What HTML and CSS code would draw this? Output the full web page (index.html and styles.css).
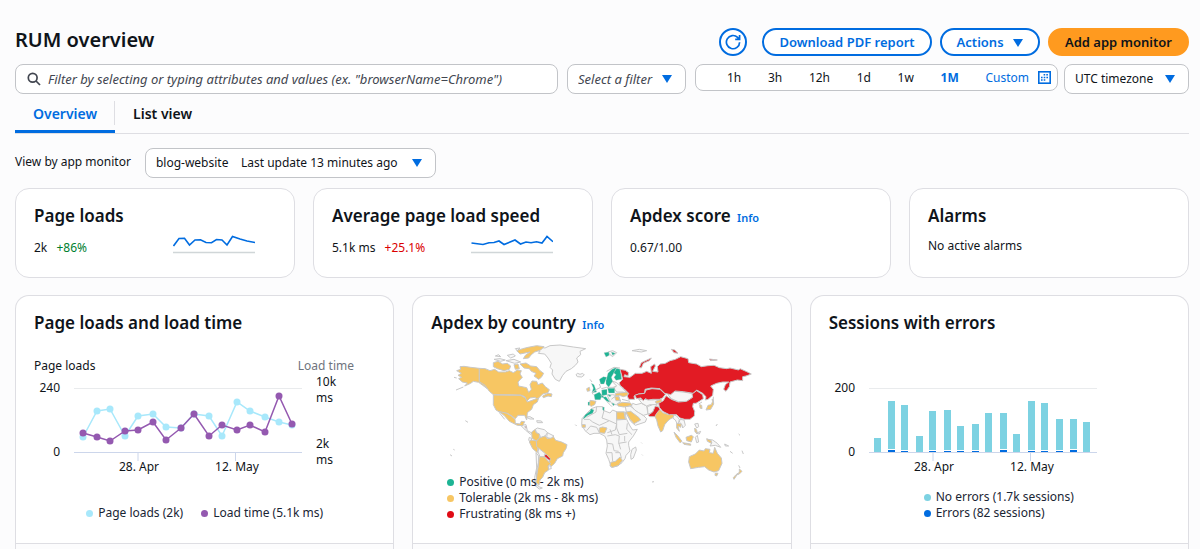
FILE: index.html
```
<!DOCTYPE html>
<html lang="en">

<head>
    <meta charset="UTF-8">
    <meta name="viewport" content="width=device-width, initial-scale=1.0">
    <title>RUM overview</title>
    <link rel="stylesheet" href="styles.css">
</head>

<body>
    <header class="page-header">
        <h1>RUM overview</h1>
        <div class="actions">
            <button type="button" class="btn btn-icon" aria-label="Refresh">
                <svg width="16" height="16" viewBox="0 0 16 16">
                    <path d="M14.6 8.200A6.600 6.600 0 1 1 12.600 3.400L14 5M14.600 1V5.400H10.200" />
                </svg>
            </button>
            <button type="button" class="btn">Download PDF report</button>
            <button type="button" class="btn btn-menu">Actions <span class="caret"></span></button>
            <button type="button" class="btn btn-primary">Add app monitor</button>
        </div>
    </header>

    <div class="toolbar">
        <div class="search">
            <svg width="14" height="14" viewBox="0 0 14 14">
                <circle cx="5.7" cy="5.7" r="4.4" />
                <path d="M9 9L13 13" />
            </svg>
            <input type="text" aria-label="Filter" placeholder="Filter by selecting or typing attributes and values (ex. &quot;browserName=Chrome&quot;)">
        </div>
        <div class="select select-filter">
            <select aria-label="Select a filter">
                <option>Select a filter</option>
            </select>
            <span class="caret"></span>
        </div>
        <div class="time-range">
            <button type="button">1h</button>
            <button type="button">3h</button>
            <button type="button">12h</button>
            <button type="button">1d</button>
            <button type="button">1w</button>
            <button type="button" class="active">1M</button>
            <button type="button" class="custom">Custom
                <svg width="13" height="13" viewBox="0 0 13 13">
                    <rect x=".8" y=".8" width="11.400" height="11.400" fill="none" stroke="currentColor" stroke-width="1.6" />
                    <path d="M5.600 3.700H10M3 6.400H10M3 9.100H7.400" stroke="currentColor" stroke-width="1.500" stroke-dasharray="1.600 1.100" />
                </svg>
            </button>
        </div>
        <div class="select select-zone">
            <select aria-label="Timezone">
                <option>UTC timezone</option>
            </select>
            <span class="caret"></span>
        </div>
    </div>

    <nav class="tabs">
        <a href="#overview" class="active">Overview</a>
        <a href="#list">List view</a>
    </nav>

    <div class="monitor">
        <label for="monitor">View by app monitor</label>
        <div class="select select-monitor">
            <select id="monitor">
                <option>blog-website&nbsp;&nbsp;&nbsp; Last update 13 minutes ago</option>
            </select>
            <span class="caret"></span>
        </div>
    </div>

    <section class="summary">
        <article class="card">
            <h2>Page loads</h2>
            <div class="metric">
                <p>2k <span class="good">+86%</span></p>
                <svg class="spark" width="82" height="20" viewBox="0 0 82 20">
                    <path class="base" d="M0 17.5H82" />
                    <polyline points="0.500,11 6,3.500 11.500,3.300 16.500,10 22,5 27.500,4.700 33,7.500 38.500,7.700 43.500,4.500 49,5 54,10 59.500,1.500 67,4 74,6 82,7.500" />
                </svg>
            </div>
        </article>
        <article class="card">
            <h2>Average page load speed</h2>
            <div class="metric">
                <p>5.1k ms <span class="bad">+25.1%</span></p>
                <svg class="spark" width="82" height="20" viewBox="0 0 82 20">
                    <path class="base" d="M0 17.5H82" />
                    <polyline points="0.500,8 12,9.500 18,7.700 23,7.500 28,6 33,9.500 44,5 49.500,9 55,7 60,7.700 65.500,6.700 71,8 76,1.500 82,6.700" />
                </svg>
            </div>
        </article>
        <article class="card">
            <h2>Apdex score <a href="#info">Info</a></h2>
            <p>0.67/1.00</p>
        </article>
        <article class="card">
            <h2>Alarms</h2>
            <p>No active alarms</p>
        </article>
    </section>

    <section class="panels">
        <article class="panel">
            <div class="panel-body">
                <h2>Page loads and load time</h2>
                <svg class="chart" width="330" height="130" viewBox="0 0 330 130">
                    <text x="0" y="19">Page loads</text>
                    <text x="320" y="19" text-anchor="end" class="muted">Load time</text>
                    <text x="26" y="41" text-anchor="end">240</text>
                    <text x="26" y="105" text-anchor="end">0</text>
                    <text x="282" y="35">10k</text>
                    <text x="282" y="51">ms</text>
                    <text x="282" y="97">2k</text>
                    <text x="282" y="113">ms</text>
                    <path class="grid" d="M40 37.500H268" />
                    <path class="axis" d="M40 101.500H268M104 102V110M201.500 102V110" />
                    <text x="105" y="120" text-anchor="middle">28. Apr</text>
                    <text x="203" y="120" text-anchor="middle">12. May</text>
                    <g id="loads" class="loads"></g>
                    <g id="time" class="time"></g>
                </svg>
                <ul class="legend legend-row">
                    <li class="c-loads">Page loads (2k)</li>
                    <li class="c-time">Load time (5.1k ms)</li>
                </ul>
            </div>
            <div class="panel-foot"></div>
        </article>

        <article class="panel">
            <div class="panel-body">
                <h2>Apdex by country <a href="#info">Info</a></h2>
                <svg class="map" width="340" height="155" viewBox="0 0 1020 465">
                    <!-- no data -->
                    <g class="none">
                        <path d="M315 42L330 34 345 36 360 29 390 27 430 33 467 38 450 46 452 56 440 66 444 78 436 88 424 98 408 106 398 118 388 136 376 130 366 114 368 102 360 94 364 82 354 66 344 54 325 52 330 46Z" />
                        <path d="M438 116L443 112 450 115 458 112 463 117 455 123 442 122Z" />
                        <path d="M272 268L288 266 292 284 306 291 302 295 286 282Z" />
                        <path d="M316 280L322 276 343 281 353 290 345 300 332 305 328 294 319 290Z" />
                        <path d="M352 290L372 300 362 308 350 304Z" />
                        <path d="M298 304L306 308 300 318 296 312Z" />
                        <path d="M327 332L340 338 350 352 345 362 330 362 324 348Z" />
                        <path d="M318 350L326 360 325 380 320 404 319 428 316 444 326 452 337 456 328 459 314 448 314 424 320 396Z" />
                        <path d="M354 388L362 391 364 398 355 400Z" />
                        <path d="M287 243L300 242 312 249 300 249Z M320 254L334 255 338 260 322 260Z" />
                        <path d="M484 218L500 212 518 212 522 224 540 231 548 222 562 228 586 228 588 246 600 270 608 282 622 280 610 300 596 318 596 328 600 345 588 358 585 368 576 380 562 390 544 394 536 370 528 352 532 330 530 312 524 300 508 292 492 292 480 296 465 284 455 266 456 248 470 232Z" />
                        <path d="M606 340L617 333 619 342 610 366 603 370 602 356Z" />
                        <path d="M586 212L600 210 626 228 642 240 650 248 646 258 616 268 602 256 590 234Z" />
                        <path d="M608 202L618 206 634 202 650 210 654 234 640 238 626 230 614 222 604 210Z" />
                        <path d="M626 190L642 190 668 192 692 188 684 200 676 208 660 206 650 210 636 202Z" />
                        <path d="M652 212L668 206 682 206 676 216 666 230 654 234Z" />
                        <path d="M714 176L735 166 760 168 790 173 788 184 770 196 745 197 724 188Z" />
                        <path d="M732 236L740 240 748 250 744 268 736 252 728 246Z M750 250L762 252 766 268 758 276 756 266 748 258Z" />
                        <path d="M544 134L560 140 572 150 592 172 578 168 560 168 550 154 560 150Z" />
                        <path d="M532 178L548 176 566 180 572 196 560 206 548 206 538 192Z" />
                        <path d="M794 264L804 262 806 272 800 276Z M798 292L812 286 808 294Z M796 304L802 298 806 318 800 320Z M832 310L848 312 862 322 872 334 856 328 840 330 846 320Z" />
                        <path d="M534 48L548 44 560 50 548 62 540 56Z M606 44L628 40 650 44 634 48 620 46Z" />
                        <path d="M192 70L210 68 226 72 212 76Z M232 58L250 54 256 60 242 66Z M196 60L206 56 212 62Z M228 74L252 70 272 78 254 82Z M262 44L256 38 270 36Z" />
                        <path d="M884 324L896 330 886 330Z M900 346L908 352M936 344L940 354M926 294L930 298M858 270L862 264M634 320L636 322M636 356L638 358M666 438L672 437M106 254L114 259M60 356L66 360M70 340L74 342M436 266L440 270" />
                    </g>
                    <path class="borders" d="M500 212L498 228 470 244M522 224L516 246 538 254M560 226L560 252 588 250M462 250L478 250 488 258 508 268 530 258M470 284L482 270 500 274 508 290M530 258L538 254 560 264 556 282 532 290M560 252L560 276 568 296 592 292M592 262L590 280 606 296M532 300L556 296 568 300 566 320 572 340M532 322L548 324 552 344 566 346M530 350L546 350 548 376M566 322L590 318M556 350L570 350 574 366M584 300L584 316M546 296L540 280" />
                    <!-- tolerable -->
                    <g class="tolerable">
                        <path d="M90 92L102 91 122 94 148 97 148 137 162 143 172 158 158 148 146 139 130 136 122 142 104 150 112 141 97 138 86 128 95 124 84 118 94 112 80 104 92 100Z" />
                        <path d="M148 97L166 98 180 104 194 100 206 108 226 108 238 104 250 110 262 102 274 104 270 114 277 124 264 138 266 150 290 155 296 169 304 160 300 146 306 135 320 136 324 146 337 141 346 152 358 161 354 170 338 174 330 182 322 190 315 184 300 186 290 196 285 182 272 177 190 176 178 166 165 148 148 137Z" />
                        <path d="M190 80L204 76 218 84 232 82 242 90 238 100 222 104 202 98 190 92Z M252 86L264 84 268 98 256 100Z" />
                        <path d="M270 84L288 81 302 90 320 92 330 104 341 112 334 124 326 130 312 120 318 112 304 106 298 98 282 96Z" />
                        <path d="M260 44L278 38 294 34 320 29 342 32 332 42 314 48 304 56 296 66 280 68 286 58 300 48 270 54Z" />
                        <path d="M338 180L354 172 366 174 364 182 354 180 340 185Z" />
                        <path d="M190 177L272 178 286 186 292 198 314 190 326 186 322 198 310 206 305 220 292 230 290 252 284 238 264 238 256 248 246 240 232 232 208 228 198 222 190 206Z" />
                        <path d="M206 226L230 232 244 240 255 250 256 262 270 264 274 256 284 257 278 269 262 268 238 256 222 238Z" />
                        <path d="M305 288L316 280 318 290 328 294 328 308 318 315 306 306Z" />
                        <path d="M302 312L318 314 325 328 322 350 308 338 298 318Z" />
                        <path d="M328 306L345 300 352 308 365 306 370 302 377 313 395 318 411 326 408 338 400 350 398 360 382 368 374 382 364 391 354 382 360 372 352 362 345 352 330 340 320 332 319 316Z" />
                        <path d="M328 362L344 363 354 376 362 382 354 390 356 402 344 410 338 424 330 432 327 448 318 440 321 414 325 390Z" />
                        <path d="M480 193L498 196 494 206 484 211 479 208Z M470 158L478 154 480 164 472 166Z M456 266L466 266 466 274 456 274Z" />
                        <path d="M508 276L518 273 531 276 524 292 508 290Z M542 379L556 376 570 363 577 373 566 388 548 394 540 390Z" />
                        <path d="M560 228L582 228 586 250 560 250Z M588 228L602 226 626 244 632 252 612 263 600 250Z" />
                        <path d="M562 203L578 199 602 201 605 208 582 213 564 210Z M556 172L576 170 594 168 594 178 580 182 568 178 556 180Z M554 182L566 182 570 194 558 194Z" />
                        <path d="M674 240L686 218 698 230 716 236 732 232 730 244 722 248 714 254 704 266 698 284 692 288 684 270 680 252Z M676 196L694 190 694 200 678 202Z" />
                        <path d="M740 262L754 264 752 274 744 270 748 286 740 276Z M732 288L742 298 756 316 750 320 738 304Z M768 304L784 298 790 302 784 318 770 314Z M758 320L782 324 782 328 762 325Z" />
                        <path d="M834 208L844 206 848 196 846 190 850 190 851 204 842 220 828 222Z M809 206L815 208 816 218 810 216Z M830 308L844 314 844 322 832 316Z M794 276L800 282 802 292 795 288Z" />
                        <path d="M778 362L796 354 808 342 822 345 826 338 840 340 838 350 850 352 854 334 862 352 874 366 876 382 866 404 852 408 836 402 824 392 806 394 782 398 776 378Z M856 411L864 412 860 420 855 418Z" />
                        <path d="M928 399L936 406 928 414 922 416 928 408Z M924 412L912 430 910 425 918 416Z" />
                    </g>
                    <!-- positive -->
                    <g class="positive">
                        <path d="M508 130L520 122 530 124 526 134 522 144 512 144Z M528 134L534 112 546 100 560 94 551 112 544 124 548 136 536 154 528 144Z M551 110L560 97 571 100 575 130 558 133 552 124 558 116Z" />
                        <path d="M484 142L492 146 500 168 486 170 490 156Z M492 176L508 168 516 178 511 191 495 191Z M515 162L531 160 531 176 516 179Z M533 157L554 157 554 171 536 171Z M518 184L528 182 540 199 530 196Z M474 198L479 198 478 208 474 208Z M512 178L522 180 516 186Z" />
                        <path d="M458 250L466 236 480 226 483 218 492 222 488 232 474 238 464 246Z M518 213L523 214 522 224 518 222Z M522 50L536 48 538 58 528 63Z M544 48L556 52 548 58Z M546 200L554 204 550 210Z M532 175L543 178 540 183Z" />
                    </g>
                    <!-- frustrating -->
                    <g class="frustrating">
                        <path d="M570 100L586 103 596 110 594 120 584 116 582 122 600 124 616 112 636 112 650 106 664 112 662 92 674 84 676 90 668 106 684 108 682 92 690 84 706 82 720 74 736 70 752 62 774 68 776 80 800 84 814 92 834 89 852 88 868 95 890 98 900 96 926 102 930 98 948 106 964 114 948 120 938 122 938 134 922 132 900 138 898 152 888 166 881 160 886 146 896 138 878 138 860 142 842 150 850 160 848 178 834 190 826 192 828 182 818 172 800 162 790 172 760 167 735 165 722 176 704 172 690 158 664 156 645 160 644 172 626 174 612 180 614 190 596 190 592 180 596 172 582 158 570 148 568 140 578 130 574 114Z" />
                        <path d="M614 178L626 174 644 172 648 162 666 158 690 160 706 175 698 186 688 190 668 190 654 192 646 188 640 194 632 186 620 188Z" />
                        <path d="M686 202L700 194 708 179 724 190 745 198 770 196 788 184 786 174 800 164 818 176 820 188 808 196 798 202 790 202 788 212 794 226 793 240 780 250 764 250 750 246 740 236 718 236 698 226 688 214Z" />
                        <path d="M654 238L668 228 676 210 686 213 690 220 680 232 674 242 660 242Z M628 94L634 80 664 66 658 74 640 82 634 96Z M724 40L734 42 744 52 732 50Z M838 69L862 72 842 74Z" />
                        <path d="M343 356L350 356 361 368 359 375 352 368 344 362Z M284 272L289 272 288 277Z" />
                    </g>
                    <path class="borders" d="M78 162L100 153M208 230L224 250M490 176L486 170 500 160 512 154 508 144M530 106L552 94 570 96M480 130L486 138M514 158L530 154 556 154M530 196L540 206 546 212M554 182L544 190M72 124L80 126M850 182L850 190M930 396L926 388M576 190L600 196M816 198L806 204" />
                </svg>
                <ul class="legend legend-map">
                    <li class="c-positive">Positive (0 ms - 2k ms)</li>
                    <li class="c-tolerable">Tolerable (2k ms - 8k ms)</li>
                    <li class="c-frustrating">Frustrating (8k ms +)</li>
                </ul>
            </div>
            <div class="panel-foot"></div>
        </article>

        <article class="panel">
            <div class="panel-body">
                <h2>Sessions with errors</h2>
                <svg class="chart" width="330" height="130" viewBox="0 0 330 130">
                    <text x="26" y="41" text-anchor="end">200</text>
                    <text x="26" y="105" text-anchor="end">0</text>
                    <path class="grid" d="M40 37.500H268" />
                    <g id="bars"></g>
                    <path class="axis" d="M40 101.500H268M104 102V110M201.500 102V110" />
                    <text x="105" y="120" text-anchor="middle">28. Apr</text>
                    <text x="203" y="120" text-anchor="middle">12. May</text>
                </svg>
                <ul class="legend legend-sessions">
                    <li class="c-ok">No errors (1.7k sessions)</li>
                    <li class="c-errors">Errors (82 sessions)</li>
                </ul>
            </div>
            <div class="panel-foot"></div>
        </article>
    </section>

    <script src="script.js"></script>
</body>

</html>
```
FILE: styles.css
```
* {
    box-sizing: border-box;
}

body {
    margin: 0;
    padding: 28px 11px 0 15px;
    min-height: 100vh;
    display: flex;
    flex-direction: column;
    background-color: #fcfcfd;
    color: #0f141a;
    font-family: "Noto Sans", "Open Sans", sans-serif;
    font-size: 12px;
    line-height: 16px;
}

h1,
h2,
p,
ul {
    margin: 0;
    padding: 0;
}

h1 {
    font-size: 20px;
    line-height: 24px;
    font-weight: 600;
}

h2 {
    font-size: 17px;
    line-height: 20px;
    font-weight: 600;
}

h2 a {
    margin-left: 2px;
    font-size: 11px;
    color: #006ce0;
    text-decoration: none;
}

button,
input,
select {
    font: inherit;
    color: inherit;
}

button {
    cursor: pointer;
}

.caret {
    display: inline-block;
    border: 5px solid transparent;
    border-top: 8px solid #006ce0;
    border-bottom: 0;
}

/* header */
.page-header {
    display: flex;
    justify-content: space-between;
    align-items: flex-start;
}

.actions {
    display: flex;
    gap: 8px;
}

.btn {
    height: 28px;
    padding: 0 15px;
    border: 2px solid #006ce0;
    border-radius: 14px;
    background-color: #fff;
    color: #006ce0;
    font-size: 13px;
    font-weight: 600;
}

.btn-icon {
    width: 28px;
    margin-right: 7px;
    padding: 0;
    display: flex;
    align-items: center;
    justify-content: center;
}

.btn-icon svg {
    flex-shrink: 0;
    fill: none;
    stroke: #006ce0;
    stroke-width: 1.7;
}

.btn-menu .caret {
    margin-left: 6px;
}

.btn-primary {
    border-color: #ff9a1f;
    background-color: #ff9a1f;
    color: #0f141a;
}

/* toolbar */
.toolbar {
    display: flex;
    align-items: flex-start;
    margin-top: 8px;
}

.search,
.select,
.time-range {
    display: flex;
    align-items: center;
    height: 30px;
    border: 1px solid #c2c4c8;
    border-radius: 8px;
    background-color: #fff;
}

.search {
    flex: 1;
    gap: 7px;
    padding: 0 11px;
    font-size: 13px;
}

.search svg {
    fill: none;
    stroke: #424650;
    stroke-width: 1.7;
}

.search input {
    flex: 1;
    min-width: 0;
    padding: 0;
    border: 0;
    outline: 0;
    background: none;
}

.search input::placeholder {
    color: #424650;
    font-style: italic;
    opacity: 1;
}

.select {
    position: relative;
}

.select select {
    width: 100%;
    height: 28px;
    padding: 0 10px;
    border: 0;
    appearance: none;
    background: none;
}

.select .caret {
    position: absolute;
    right: 13px;
    top: 10px;
    pointer-events: none;
}

.select-filter {
    width: 119px;
    margin-left: 9px;
    color: #424650;
    font-size: 13px;
    font-style: italic;
}

.select-zone {
    width: 125px;
    margin-left: 6px;
}

.select-monitor {
    width: 291px;
}

.time-range {
    width: 363px;
    height: 27px;
    margin-left: 9px;
    padding: 0 6px 0 31px;
    justify-content: space-between;
}

.time-range button {
    padding: 0;
    border: 0;
    background: none;
}

.time-range .active {
    color: #006ce0;
    font-weight: 700;
}

.time-range .custom {
    display: flex;
    align-items: center;
    gap: 9px;
    color: #006ce0;
}

/* tabs */
.tabs {
    display: flex;
    border-bottom: 1px solid #dedee3;
}

.tabs a {
    position: relative;
    height: 39px;
    padding: 12px 18px 0;
    color: #0f141a;
    font-size: 14px;
    font-weight: 600;
    text-decoration: none;
}

.tabs .active {
    border-bottom: 3px solid #006ce0;
    color: #006ce0;
}

.tabs .active::after {
    content: "";
    position: absolute;
    right: 0;
    top: 7px;
    height: 24px;
    border-right: 1px solid #dedee3;
}

.monitor {
    display: flex;
    gap: 14px;
    padding-top: 14px;
}

.monitor label {
    padding-top: 6px;
}

/* summary cards */
.summary {
    display: grid;
    grid-template-columns: repeat(4, 1fr);
    gap: 18px;
    margin-top: 10px;
}

.card,
.panel {
    border: 1px solid #dedee3;
    border-radius: 14px;
    background-color: #fff;
}

.card {
    height: 90px;
    padding: 17px 18px;
}

.card p {
    margin-top: 12px;
}

.metric {
    display: flex;
    justify-content: space-between;
    padding-right: 21px;
}

.metric .good,
.metric .bad {
    margin-left: 6px;
    color: #00802f;
}

.metric .bad {
    color: #db0000;
}

.card .metric p {
    margin-top: 14px;
}

.spark {
    margin-top: 9px;
    fill: none;
    stroke: #006ce0;
    stroke-width: 1.6;
}

.spark .base {
    stroke: #d0d6d8;
}

/* chart panels */
.panels {
    flex: 1;
    display: grid;
    grid-template-columns: repeat(3, 1fr);
    gap: 18px;
    margin-top: 17px;
}

.panel {
    display: flex;
    flex-direction: column;
    border-bottom: 0;
    border-radius: 14px 14px 0 0;
}

.panel-body {
    height: 247px;
    padding: 17px 18px 0;
}

.panel-foot {
    flex: 1;
    min-height: 6px;
    border-top: 1px solid #dedee3;
    background-color: #fcfcfd;
}

.chart {
    display: block;
    margin-top: 18px;
}

.chart text {
    fill: #0f141a;
}

.chart .muted {
    fill: #6f747d;
}

.grid {
    stroke: #e9ebed;
}

.axis {
    stroke: #ccd6eb;
}

.loads {
    color: #a8e8fb;
}

.time {
    color: #9459b0;
}

.loads polyline,
.time polyline {
    fill: none;
    stroke: currentColor;
    stroke-width: 1.5;
}

.loads circle,
.time circle {
    fill: currentColor;
}

.bar-ok {
    fill: #7dd2e2;
}

.bar-errors {
    fill: #006ce0;
}

.map {
    display: block;
    margin: 1px 0 0 -1px;
    stroke: #c8c8c8;
    stroke-width: 3;
    stroke-linejoin: round;
}

.none {
    fill: #f7f7f7;
}

.borders {
    fill: none;
}

.tolerable {
    fill: #f7c663;
}

.positive {
    fill: #1db494;
    stroke-width: 1;
}

.frustrating {
    fill: #e21b24;
}

.legend {
    list-style: none;
    color: #192534;
}

.legend li {
    display: flex;
    align-items: center;
    gap: 5px;
}

.legend li::before {
    content: "";
    width: 7px;
    height: 7px;
    border-radius: 50%;
    background-color: currentColor;
}

.legend-row {
    display: flex;
    justify-content: center;
    gap: 18px;
    margin-top: 24px;
}

/* the map legend lies over the southern end of the map */
.legend-map {
    position: relative;
    margin: -17px 0 0 16px;
}

.legend-sessions {
    margin: 8px 0 0 95px;
}

.c-loads::before {
    color: #a8e8fb;
}

.c-time::before {
    color: #9459b0;
}

.c-positive::before {
    color: #1db494;
}

.c-tolerable::before {
    color: #f7c663;
}

.c-frustrating::before {
    color: #e00b15;
}

.c-ok::before {
    color: #7dd2e2;
}

.c-errors::before {
    color: #006ce0;
}
```
FILE: script.js
```
const svgNS = 'http://www.w3.org/2000/svg';
const xs = [49, 63, 76, 91, 104, 119, 132, 147, 160, 175, 188, 203, 216, 231, 245, 258];

function add(parent, tag, attrs) {
    const el = document.createElementNS(svgNS, tag);
    for (const name in attrs) {
        el.setAttribute(name, attrs[name]);
    }
    parent.appendChild(el);
}

function drawLine(id, ys) {
    const group = document.getElementById(id);
    add(group, 'polyline', { points: ys.map((y, i) => xs[i] + ',' + y).join(' ') });
    ys.forEach((y, i) => add(group, 'circle', { cx: xs[i], cy: y, r: 3.5 }));
}

// [total height, errors height]
function drawBars(data) {
    const group = document.getElementById('bars');
    data.forEach(([total, errors], i) => {
        const gap = errors ? errors + 1 : 0;
        add(group, 'rect', { class: 'bar-ok', x: xs[i] - 4, y: 101 - total, width: 7, height: total - gap });
        add(group, 'rect', { class: 'bar-errors', x: xs[i] - 4, y: 101 - errors, width: 7, height: errors });
    });
}

drawLine('loads', [86, 60, 58, 85, 65, 63, 76, 77, 63, 65, 85, 51, 60, 66, 71, 74]);
drawLine('time', [82, 86, 90, 80, 79, 71, 89, 77, 63, 85, 74, 79, 74, 81, 45, 73]);
drawBars([[14, 0], [51, 2], [47, 1], [16, 0], [41, 1], [42, 1], [26, 1], [28, 1], [39, 0], [39, 2], [18, 0], [51, 1], [49, 1], [33, 1], [33, 2], [30, 0]]);
```
